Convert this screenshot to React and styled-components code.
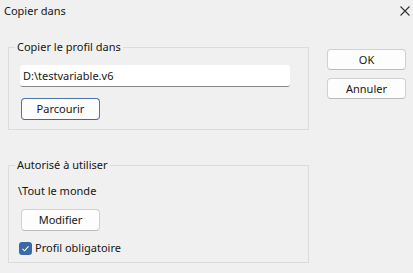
import React from 'react'
import styled, {createGlobalStyle} from 'styled-components'

const GlobalStyle = createGlobalStyle`
    html, body {
        margin: 0;
        padding: 0;
        background: #f0f0f0;
    }
    body {
        font-family: "Noto Sans", "DejaVu Sans", sans-serif;
        font-size: 11px;
        color: #161616;
    }
`

const Dialog = styled.div`
    width: 413px;
    height: 273px;
    background: #f0f0f0;
    display: flex;
    flex-direction: column;
    overflow: hidden;
`
const TitleBar = styled.div`
    height: 22px;
    display: flex;
    align-items: center;
    justify-content: space-between;
    padding: 0 3px 0 4px;
    line-height: 16px;
`
const CloseIcon = styled.svg`
    width: 10px;
    height: 10px;
    display: block;
`
const Body = styled.div`
    display: flex;
    flex-direction: row;
    align-items: flex-start;
    padding: 17px 7px 0 8px;
`
const LeftColumn = styled.div`
    width: 301px;
    display: flex;
    flex-direction: column;
    gap: 27px;
`
const RightColumn = styled.div`
    margin-left: 18px;
    margin-top: 10px;
    display: flex;
    flex-direction: column;
    gap: 8px;
`
const Group = styled.fieldset`
    margin: 0;
    padding: 10px 10px ${p => p.$bottom}px 10px;
    border: 1px solid #dcdcdc;
    display: flex;
    flex-direction: column;
    align-items: flex-start;
    min-width: 0;
`
const Legend = styled.legend`
    margin-left: -4px;
    padding: 0 2px;
    line-height: 16px;
`
const Field = styled.div`
    width: 270px;
    height: 22px;
    margin-left: 1px;
    box-sizing: border-box;
    background: #ffffff;
    border-radius: 3px;
    border-bottom: 1px solid #8a8a8a;
    display: flex;
    align-items: center;
    padding-left: 3px;
    line-height: 16px;
`
const Button = styled.button`
    width: 79px;
    height: ${p => p.$h || 22}px;
    margin: ${p => p.$m || 0};
    box-sizing: border-box;
    background: #fdfdfd;
    border: 1px solid ${p => p.$focus ? '#4a76a8' : '#d0d0d0'};
    border-bottom-color: ${p => p.$focus ? '#3d6ba1' : '#bcbcbc'};
    border-radius: 4px;
    font-family: inherit;
    font-size: 11px;
    color: #161616;
    padding: 0;
    line-height: 16px;
`
const Text = styled.div`
    line-height: 16px;
    margin-left: -1px;
`
const CheckRow = styled.label`
    display: flex;
    align-items: center;
    gap: 3px;
    margin-top: 9px;
    line-height: 16px;
`
const CheckBox = styled.span`
    width: 13px;
    height: 13px;
    box-sizing: border-box;
    border-radius: 3px;
    background: #3a6aa5;
    display: flex;
    align-items: center;
    justify-content: center;
`

const App = () => {
    return (
        <Dialog>
            <GlobalStyle/>
            <TitleBar>
                <span>Copier dans</span>
                <CloseIcon viewBox="0 0 10 10">
                    <path d="M0.5 0.5 L9.5 9.5 M9.5 0.5 L0.5 9.5" stroke="#333" strokeWidth="1.1"/>
                </CloseIcon>
            </TitleBar>
            <Body>
                <LeftColumn>
                    <Group $bottom={9}>
                        <Legend>Copier le profil dans</Legend>
                        <Field>D:\testvariable.v6</Field>
                        <Button $focus $m="11px 0 0 2px">Parcourir</Button>
                    </Group>
                    <Group $bottom={6}>
                        <Legend>Autorisé à utiliser</Legend>
                        <Text>\Tout le monde</Text>
                        <Button $m="10px 0 0 2px">Modifier</Button>
                        <CheckRow>
                            <CheckBox>
                                <svg width="9" height="9" viewBox="0 0 9 9">
                                    <path d="M1.5 4.8 L3.6 6.8 L7.5 2.3" fill="none" stroke="#fff" strokeWidth="1.1"/>
                                </svg>
                            </CheckBox>
                            Profil obligatoire
                        </CheckRow>
                    </Group>
                </LeftColumn>
                <RightColumn>
                    <Button $h={21}>OK</Button>
                    <Button $h={21}>Annuler</Button>
                </RightColumn>
            </Body>
        </Dialog>
    )
}

export default App
